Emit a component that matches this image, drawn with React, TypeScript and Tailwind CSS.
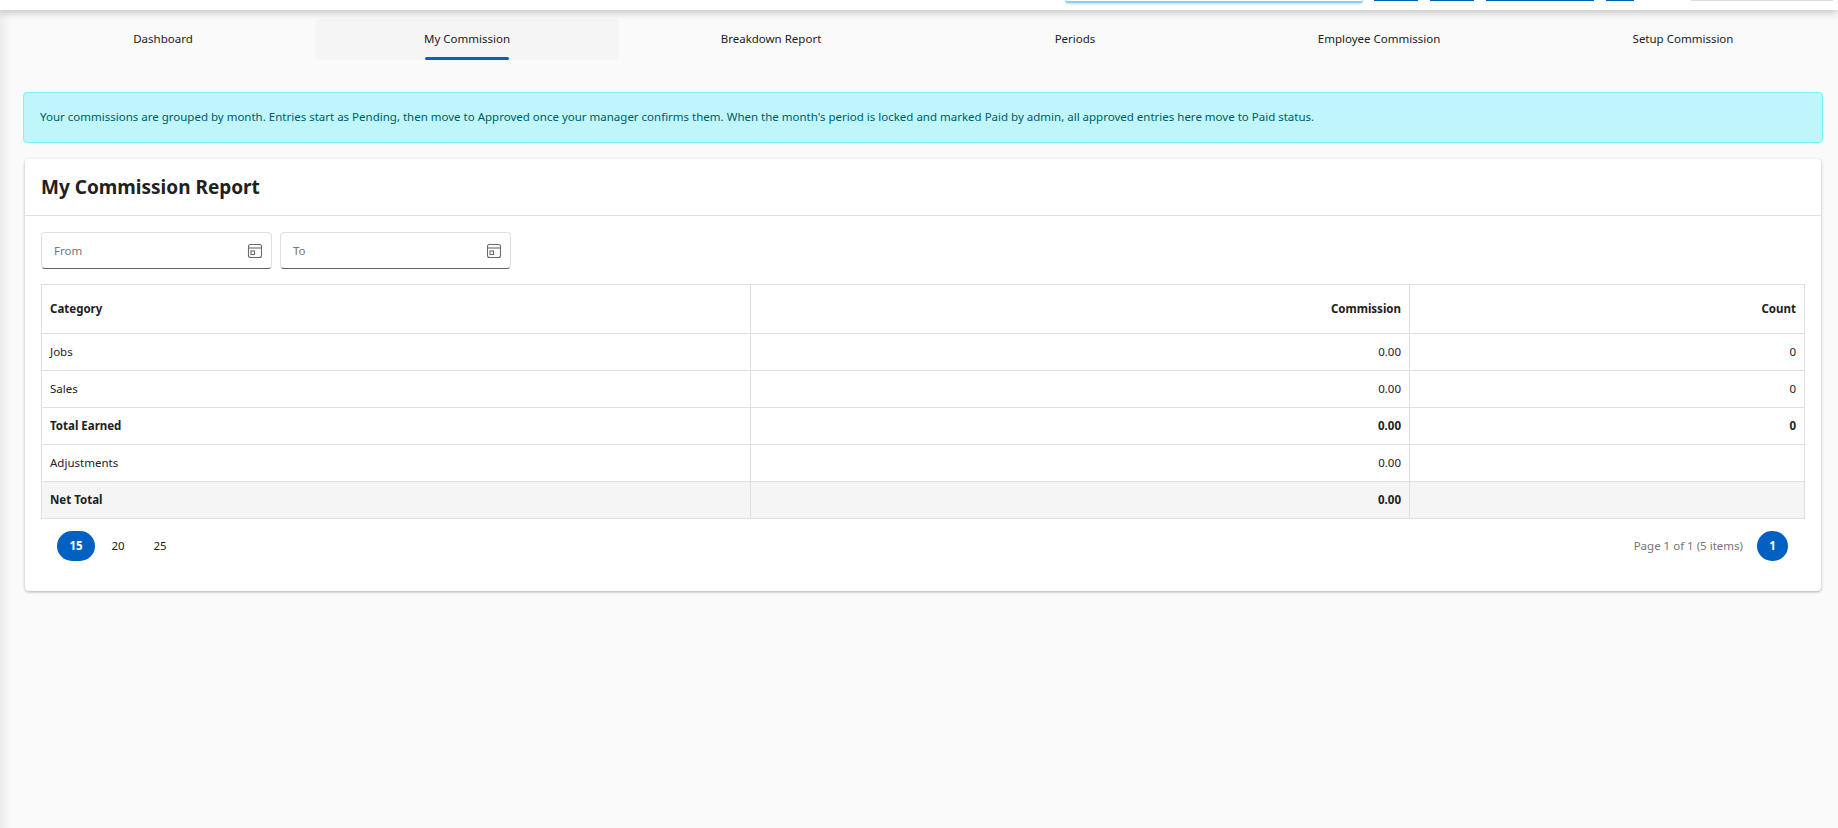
const font = "font-['Noto_Sans','Liberation_Sans',sans-serif]";

const TABS = ["Dashboard", "My Commission", "Breakdown Report", "Periods", "Employee Commission", "Setup Commission"];

const ROWS = [
  { name: "Jobs", commission: "0.00", count: "0" },
  { name: "Sales", commission: "0.00", count: "0" },
  { name: "Total Earned", commission: "0.00", count: "0", bold: true },
  { name: "Adjustments", commission: "0.00", count: "" },
  { name: "Net Total", commission: "0.00", count: "", bold: true, shaded: true },
];

function CalendarIcon() {
  return (
    <svg width="16" height="16" viewBox="0 0 16 16" fill="none" stroke="#6b6b6b" strokeWidth="1.1">
      <rect x="1.5" y="1.5" width="13" height="13" rx="2" />
      <path d="M1.5 5h13" />
      <rect x="4" y="8" width="3.5" height="3.5" />
    </svg>
  );
}

function DateField({ label }: { label: string }) {
  return (
    <div className="flex h-[37px] w-[231px] items-center justify-between rounded-[4px] border border-[#e0e0e0] border-b-[#616161] bg-white pl-3 pr-2 text-[11.5px] text-[#757575]">
      <span>{label}</span>
      <CalendarIcon />
    </div>
  );
}

function TopBar() {
  return (
    <div className="relative z-10 flex h-[10px] bg-white shadow-[0_2px_8px_rgba(0,0,0,0.25)]">
      <div className="ml-[1065px] h-[3px] w-[298px] rounded-b-[5px] border-b-2 border-[#90caf9] shadow-[0_1px_3px_#bbdefb]" />
      <div className="ml-[11px] h-px w-11 bg-[#0061c2]" />
      <div className="ml-3 h-px w-11 bg-[#0061c2]" />
      <div className="ml-3 h-px w-[108px] bg-[#0061c2]" />
      <div className="ml-3 h-px w-7 bg-[#0061c2]" />
      <div className="ml-[57px] h-px w-[142px] bg-[#dcdcdc]" />
    </div>
  );
}

export default function App() {
  return (
    <div className={`${font} flex h-[828px] w-[1838px] flex-col overflow-hidden bg-[#fafafa] text-[#212121]`}>
      <TopBar />
      <div className="flex flex-1">
        <div className="w-[11px] bg-gradient-to-r from-[#ececec] to-[#fafafa]" />
        <main className="w-[1824px]">
          <nav className="mt-[9px] grid h-[41px] grid-cols-6 text-[11.5px]">
            {TABS.map((tab) => (
              <div
                key={tab}
                className={`relative flex items-center justify-center rounded-[4px] pb-px ${tab === "My Commission" ? "bg-[#f5f5f5]" : ""}`}
              >
                {tab}
                {tab === "My Commission" && (
                  <span className="absolute bottom-0 left-[110px] h-[3px] w-[84px] rounded-[2px] bg-[#0061c2]" />
                )}
              </div>
            ))}
          </nav>

          <div className="ml-[12px] mt-8 flex h-[51px] w-[1800px] items-center rounded-[4px] border border-[#80f0fb] bg-[#bff6fc] px-4 pb-px text-[11.5px] text-[#005b66]">
            Your commissions are grouped by month. Entries start as Pending, then move to Approved once your manager confirms them. When the month's period is locked and marked Paid by admin, all approved entries here move to Paid status.
          </div>

          <section className="ml-[14px] mt-4 h-[432px] w-[1796px] rounded-[4px] bg-white shadow-[0_1px_3px_rgba(0,0,0,0.3)]">
            <h1 className="flex h-[57px] items-center border-b border-[#e0e0e0] px-4 text-[19px] font-bold">My Commission Report</h1>

            <div className="flex gap-2 pl-4 pt-4">
              <DateField label="From" />
              <DateField label="To" />
            </div>

            <table className="ml-4 mt-[15px] w-[1764px] table-fixed border-collapse text-[11.5px]">
              <colgroup>
                <col className="w-[709px]" />
                <col className="w-[659px]" />
                <col />
              </colgroup>
              <thead>
                <tr className="h-[49px] font-bold">
                  <th className="border border-[#e0e0e0] px-2 text-left">Category</th>
                  <th className="border border-[#e0e0e0] px-2 text-right">Commission</th>
                  <th className="border border-[#e0e0e0] px-2 text-right">Count</th>
                </tr>
              </thead>
              <tbody>
                {ROWS.map((row) => (
                  <tr key={row.name} className={`h-[37px] ${row.bold ? "font-bold" : ""} ${row.shaded ? "bg-[#f5f5f5]" : ""}`}>
                    <td className="border border-[#e0e0e0] px-2">{row.name}</td>
                    <td className="border border-[#e0e0e0] px-2 text-right">{row.commission}</td>
                    <td className="border border-[#e0e0e0] px-2 text-right">{row.count}</td>
                  </tr>
                ))}
              </tbody>
            </table>

            <div className="ml-8 mr-[33px] mt-3 flex items-center justify-between text-[11.5px]">
              <div className="flex gap-1">
                <span className="flex h-[30px] w-[38px] items-center justify-center rounded-full bg-[#0061c2] font-bold text-white">15</span>
                <span className="flex h-[30px] w-[38px] items-center justify-center">20</span>
                <span className="flex h-[30px] w-[38px] items-center justify-center">25</span>
              </div>
              <div className="flex items-center gap-[14px]">
                <span className="text-[#757575]">Page 1 of 1 (5 items)</span>
                <span className="flex h-[30px] w-[31px] items-center justify-center rounded-full bg-[#0061c2] font-bold text-white">1</span>
              </div>
            </div>
          </section>
        </main>
      </div>
    </div>
  );
}
